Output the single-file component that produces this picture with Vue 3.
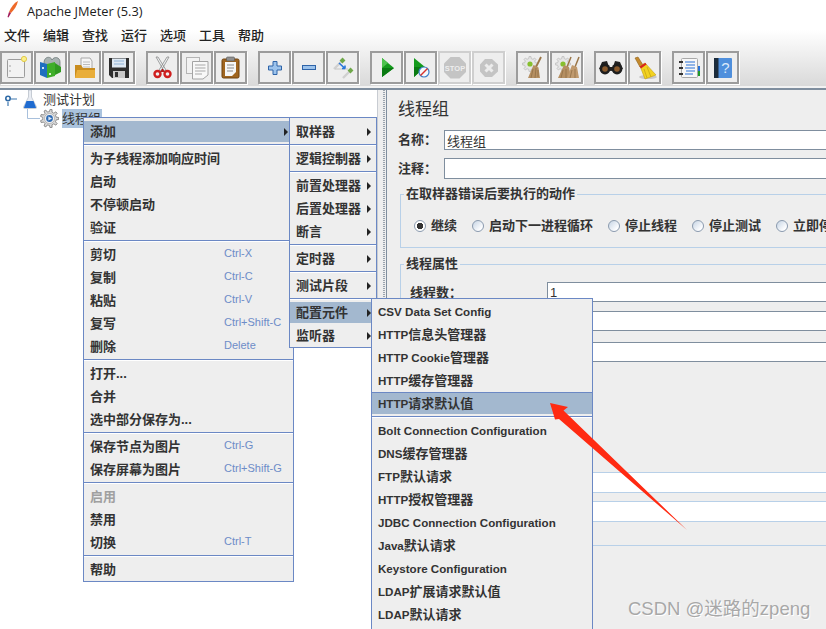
<template>
  <div class="jmeter">
    <div class="top">
      <div class="titlebar">
        <svg class="feather" width="14" height="18" viewBox="0 0 14 18">
          <path d="M12 0 C8 2 5 6 3 11 L5 12 C8 9 11 5 12 0 Z" fill="#ee6a2a" />
          <path d="M3 11 L1.5 16 L2.5 16.5 L5 12 Z" fill="#a01a5a" />
        </svg>
        <span>Apache JMeter (5.3)</span>
      </div>
      <div class="menubar">
        <span v-for="m in menuBar" :key="m">{{ m }}</span>
      </div>
      <div class="toolbar">
        <div class="tool-group">
          <button class="tool">
            <svg viewBox="0 0 29 29">
              <rect x="5.5" y="6.5" width="17" height="18" rx="1" fill="#f2f2f2" stroke="#9c9c9c" />
              <circle cx="8" cy="13" r=".8" fill="#999" /><circle cx="8" cy="18" r=".8" fill="#999" />
              <circle cx="22" cy="6" r="2.6" fill="#fbf08a" stroke="#e0c94a" />
            </svg>
          </button>
          <button class="tool">
            <svg viewBox="0 0 29 29">
              <path d="M8 10 C8 3 15 3 16 7 C18 3 24 4 24 9 L24 14 L8 14 Z" fill="#a8b2b2" stroke="#6f7a7a" stroke-width=".8" />
              <path d="M4 9 L11 11 L11 25 L4 22 Z" fill="#1f6fc0" />
              <path d="M11 11 L19 9 L19 23 L11 25 Z" fill="#3fae2a" />
              <path d="M19 10 L25 14 L25 19 L19 22 Z" fill="#2f9a20" />
              <rect x="6" y="14" width="2" height="2" fill="#cfe4f7" /><rect x="13" y="20" width="2" height="2" fill="#d8f0cc" />
            </svg>
          </button>
          <button class="tool">
            <svg viewBox="0 0 29 29">
              <path d="M11 5 L20 5 L22 8 L22 17 L11 17 Z" fill="#f5f5f5" stroke="#a8a8a8" />
              <path d="M13 9 H20 M13 11.5 H20 M13 14 H20" stroke="#bcbcbc" />
              <path d="M5 12 L11 12 L13 15 L25 15 L25 25 L5 25 Z" fill="#c98d1f" />
              <path d="M5 25 L7 17 L25 17 L25 25 Z" fill="#e9ae3a" />
            </svg>
          </button>
          <button class="tool">
            <svg viewBox="0 0 29 29">
              <path d="M5 5 H25 V25 H8 L5 22 Z" fill="#2e2e2e" />
              <rect x="8" y="5.5" width="14" height="9" fill="#dfe9f3" />
              <path d="M10 8 H20 M10 11 H20" stroke="#8fb2d6" />
              <rect x="9" y="18" width="12" height="7" fill="#c9c9c9" /><rect x="11" y="19" width="3" height="5" fill="#333" />
            </svg>
          </button>
        </div>
        <div class="tool-group">
          <button class="tool">
            <svg viewBox="0 0 29 29">
              <path d="M8 4 L10 4 L18 17 L16 18 Z M21 4 L19 4 L11 17 L13 18 Z" fill="#eceff0" stroke="#8c8c8c" stroke-width=".8" />
              <circle cx="9.5" cy="21" r="3" fill="none" stroke="#cf1f1f" stroke-width="2.4" />
              <circle cx="19.5" cy="21" r="3" fill="none" stroke="#cf1f1f" stroke-width="2.4" />
              <path d="M12 19 L17 19 L15 16 L14 16 Z" fill="#b41a1a" />
            </svg>
          </button>
          <button class="tool">
            <svg viewBox="0 0 29 29">
              <rect x="4.5" y="4.5" width="13" height="16" fill="#f2f2f2" stroke="#b4b4b4" />
              <path d="M10.5 8.5 H26 V22 L21 26 H10.5 Z" fill="#f8f8f8" stroke="#a4a4a4" />
              <path d="M13 12 H23.5 M13 15 H23.5 M13 18 H23.5 M13 21 H20" stroke="#a8a8a8" />
            </svg>
          </button>
          <button class="tool">
            <svg viewBox="0 0 29 29">
              <rect x="6" y="6" width="17" height="19" rx="1.5" fill="#a0651f" stroke="#6e4210" />
              <path d="M9 9 H20 V19 L16 23 H9 Z" fill="#f6f6f6" />
              <path d="M11 12 H18 M11 15 H18 M11 18 H17" stroke="#8c8c8c" />
              <rect x="10.5" y="4" width="8" height="4" rx="1" fill="#8f8f8f" stroke="#555" stroke-width=".6" />
            </svg>
          </button>
        </div>
        <div class="tool-group">
          <button class="tool">
            <svg viewBox="0 0 29 29">
              <path d="M13 8.5 H17 V13 H21.5 V17 H17 V21.5 H13 V17 H8.5 V13 H13 Z" fill="#9cc3ec" stroke="#2f64a8" />
            </svg>
          </button>
          <button class="tool">
            <svg viewBox="0 0 29 29">
              <rect x="8.5" y="12.5" width="13" height="4" fill="#9cc3ec" stroke="#2f64a8" />
            </svg>
          </button>
          <button class="tool">
            <svg viewBox="0 0 29 29">
              <path d="M6 16 L14 8" stroke="#d0d0d0" stroke-width="2.4" /><path d="M13 9 L16 6" stroke="#6fa84a" stroke-width="4" />
              <path d="M15 25 L22 18" stroke="#d0d0d0" stroke-width="2.4" /><path d="M21 19 L24 16" stroke="#6fa84a" stroke-width="4" />
              <path d="M7 16 L20 16 M11 10 L18 16" stroke="#c4c4c4" />
              <path d="M11 10 L17 15.5 M17 15.5 L17 12.5 M17 15.5 L14 15.5" stroke="#2a78dc" stroke-width="1.6" fill="none" />
            </svg>
          </button>
        </div>
        <div class="tool-group">
          <button class="tool">
            <svg viewBox="0 0 29 29">
              <path d="M10 5 L22 15 L10 24 Z" fill="#149a1c" />
              <path d="M10 15 L22 15 L10 24 Z" fill="#0a7a12" />
              <path d="M10 5 L10 15 L16 10 Z" fill="#4cc24c" />
            </svg>
          </button>
          <button class="tool">
            <svg viewBox="0 0 29 29">
              <path d="M8 5 L19 14 L8 24 Z" fill="#149a1c" />
              <path d="M8 14 L19 14 L8 24 Z" fill="#0a7a12" />
              <circle cx="18" cy="19" r="5" fill="#f4f8fc" stroke="#3f7fc8" stroke-width="1.2" />
              <path d="M14.5 22.5 L21.5 15.5" stroke="#d8322a" stroke-width="1.4" />
            </svg>
          </button>
          <button class="tool off">
            <svg viewBox="0 0 29 29">
              <path d="M10.5 4 H19.5 L26 10.5 V19 L19.5 25.5 H10.5 L4 19 V10.5 Z" fill="#c4c4c4" />
              <text x="15" y="17.5" text-anchor="middle" class="stop-text">STOP</text>
            </svg>
          </button>
          <button class="tool off">
            <svg viewBox="0 0 29 29">
              <path d="M11 6 H18 L24 11.5 V18.5 L18 24 H11 L6 18.5 V11.5 Z" fill="#c4c4c4" />
              <path d="M11.5 11.5 L18.5 18.5 M18.5 11.5 L11.5 18.5" stroke="#ececec" stroke-width="3" />
            </svg>
          </button>
        </div>
        <div class="tool-group">
          <button class="tool">
            <svg viewBox="0 0 29 29">
              <path :d="gearPath(12, 11, 7.5, 5.5, 8)" fill="#e6e6e6" stroke="#c4c4c4" />
              <circle cx="12" cy="11" r="2.6" fill="#86bf2e" />
              <path d="M23 4 L18 14" stroke="#9a7648" stroke-width="1.8" />
              <path d="M15.5 12 L20.5 14.5 L22 25 L10 25 Z" fill="#b58f62" />
              <path d="M15 16 L13 25 M18 15 L17 25 M20 17 L20 24" stroke="#8a6a42" stroke-width=".7" />
            </svg>
          </button>
          <button class="tool">
            <svg viewBox="0 0 29 29">
              <path :d="gearPath(11, 11, 7.5, 5.5, 8)" fill="#e6e6e6" stroke="#c4c4c4" />
              <circle cx="11" cy="11" r="2.6" fill="#86bf2e" />
              <path d="M19 4 L15 14 M27 4 L23 14" stroke="#9a7648" stroke-width="1.5" />
              <path d="M12 12 L17 14 L19 25 L6 25 Z" fill="#b58f62" />
              <path d="M20 12 L25 14 L27 25 L15 25 Z" fill="#c09a6e" />
              <path d="M11 17 L9 25 M14 16 L14 25 M20 17 L18 25 M23 16 L23 25" stroke="#8a6a42" stroke-width=".7" />
            </svg>
          </button>
        </div>
        <div class="tool-group">
          <button class="tool">
            <svg viewBox="0 0 29 29">
              <path d="M6 9 L11 8 L13 14 L17 14 L19 8 L24 9 L27 16 L15 18 L3 16 Z" fill="#222" />
              <circle cx="9" cy="16" r="5.4" fill="#1e1e1e" /><circle cx="21" cy="16" r="5.4" fill="#1e1e1e" />
              <circle cx="9" cy="16" r="2.8" fill="#8a5a2c" /><circle cx="21" cy="16" r="2.8" fill="#8a5a2c" />
            </svg>
          </button>
          <button class="tool">
            <svg viewBox="0 0 29 29">
              <ellipse cx="18" cy="24" rx="9" ry="2" fill="#c8c8c8" />
              <path d="M5 5 L8 4 L13 12 L10 14 Z" fill="#c48a2e" stroke="#8f621a" stroke-width=".6" />
              <path d="M10 13 L15 10 L26 22 L15 26 Z" fill="#f2d21f" stroke="#c2a012" stroke-width=".6" />
              <path d="M9.5 13.5 L15.5 9.8 L16.5 11.5 L11 15.5 Z" fill="#d8261f" />
              <path d="M14 16 L17 25 M17 14 L21 24" stroke="#c2a012" stroke-width=".7" />
            </svg>
          </button>
        </div>
        <div class="tool-group">
          <button class="tool">
            <svg viewBox="0 0 29 29">
              <rect x="7.5" y="5.5" width="16" height="19" rx="1" fill="#f7f7f7" stroke="#a8a8a8" />
              <path d="M5 9 H9 M5 15 H9 M5 21 H9" stroke="#333" stroke-width="2" />
              <path d="M11 9 H21 M12 12 H21 M11 15 H21 M12 18 H21 M11 21 H19" stroke="#2a72d8" stroke-width="1.1" />
              <rect x="24" y="13" width="2" height="5" fill="#2a72d8" /><rect x="24" y="18" width="2" height="5" fill="#1f9a2a" />
            </svg>
          </button>
          <button class="tool">
            <svg viewBox="0 0 29 29">
              <rect x="6" y="5" width="18" height="20" rx="1" fill="#4f8fdc" />
              <rect x="6" y="5" width="4.5" height="20" fill="#1c2c3c" />
              <text x="17.5" y="20" text-anchor="middle" class="help-text">?</text>
            </svg>
          </button>
        </div>
      </div>
    </div>

    <div class="workspace">
      <div class="tree">
        <div class="tree-row">
          <svg class="handle" width="19" height="19" viewBox="0 0 19 19">
            <path d="M4 12 V16 M7 9 H13" stroke="#3f78b0" stroke-width="1.2" />
            <circle cx="4" cy="8.5" r="2.2" fill="#fff" stroke="#2f6aa6" stroke-width="1.6" />
          </svg>
          <svg width="14" height="19" viewBox="0 0 14 19">
            <path d="M5.5 0 H8.5 V7 L13.5 17 Q14 18.5 12 18.5 H2 Q0 18.5 .5 17 L5.5 7 Z" fill="#e8ecf2" stroke="#a8b0bc" stroke-width=".6" />
            <path d="M3.5 11 H10.5 L13 17.5 Q13 18 12 18 H2 Q1 18 1 17.5 Z" fill="#1f6bd0" />
          </svg>
          <span class="tree-label">测试计划</span>
        </div>
        <div class="tree-row child">
          <svg width="13" height="19" viewBox="0 0 13 19">
            <path d="M.5 0 V9.5 H13" fill="none" stroke="#a8c0dc" />
          </svg>
          <svg width="19" height="19" viewBox="0 0 19 19">
            <path :d="gearPath(9.5, 9.5, 9.2, 6.8, 9)" fill="#d8d8d8" stroke="#777" stroke-width=".8" />
            <circle cx="9.5" cy="9.5" r="5" fill="#f4f4f4" stroke="#999" stroke-width=".6" />
            <circle cx="9.5" cy="9.5" r="3.4" fill="#2f6cb4" />
            <path d="M8.4 7.6 L12 9.5 L8.4 11.4 Z" fill="#dce8f6" />
          </svg>
          <span class="tree-label selected">线程组</span>
        </div>
      </div>
      <div class="gripper"></div>
      <div class="form">
        <div class="form-title">线程组</div>
        <div class="field name-field">
          <label>名称：</label>
          <input class="input" value="线程组" readonly />
        </div>
        <div class="field comment-field">
          <label>注释：</label>
          <input class="input tall" readonly />
        </div>
        <fieldset class="group action-group">
          <legend>在取样器错误后要执行的动作</legend>
          <div class="radios">
            <span v-for="(r, i) in radios" :key="r" class="radio-item">
              <i class="radio" :class="{ checked: i === 0 }"></i>{{ r }}
            </span>
          </div>
        </fieldset>
        <fieldset class="group thread-group">
          <legend>线程属性</legend>
          <div class="thread-count">
            <label>线程数：</label>
            <input class="input" value="1" readonly />
          </div>
          <div class="thread-inputs">
            <input class="input ramp" readonly />
            <input class="input loop" readonly />
            <input class="input soft first-soft" readonly />
            <input class="input soft second-soft" readonly />
          </div>
        </fieldset>
      </div>
    </div>

    <div class="menu main-menu">
      <template v-for="(item, i) in mainMenu" :key="i">
        <div v-if="item.sep" class="sep"></div>
        <div v-else class="item" :class="{ active: item.active, disabled: item.disabled }">
          <span class="item-label">{{ item.label }}</span>
          <span v-if="item.key" class="shortcut">{{ item.key }}</span>
          <i v-if="item.more" class="more"></i>
        </div>
      </template>
    </div>
    <div class="menu add-menu">
      <template v-for="(item, i) in addMenu" :key="i">
        <div v-if="item.sep" class="sep"></div>
        <div v-else class="item" :class="{ active: item.active }">
          <span class="item-label">{{ item.label }}</span>
          <i class="more"></i>
        </div>
      </template>
    </div>
    <div class="menu config-menu">
      <template v-for="(item, i) in configMenu" :key="i">
        <div v-if="item.sep" class="sep"></div>
        <div v-else class="item" :class="{ active: item.active }">
          <span class="item-label">
            <span v-for="(part, p) in splitLatin(item.label)" :key="p" :class="{ latin: part.latin }">{{ part.text }}</span>
          </span>
        </div>
      </template>
    </div>

    <svg class="callout" width="826" height="629" viewBox="0 0 826 629">
      <path d="M550 403 L568 407 L563.5 410.5 L687 530 L559 419 L555 419.5 Z" fill="#ff2a12" />
    </svg>
    <div class="watermark">CSDN @迷路的zpeng</div>
  </div>
</template>

<script setup>
const menuBar = ['文件', '编辑', '查找', '运行', '选项', '工具', '帮助']
const radios = ['继续', '启动下一进程循环', '停止线程', '停止测试', '立即停止测试']

const mainMenu = [
  { label: '添加', active: true, more: true },
  { sep: true },
  { label: '为子线程添加响应时间' },
  { label: '启动' },
  { label: '不停顿启动' },
  { label: '验证' },
  { sep: true },
  { label: '剪切', key: 'Ctrl-X' },
  { label: '复制', key: 'Ctrl-C' },
  { label: '粘贴', key: 'Ctrl-V' },
  { label: '复写', key: 'Ctrl+Shift-C' },
  { label: '删除', key: 'Delete' },
  { sep: true },
  { label: '打开...' },
  { label: '合并' },
  { label: '选中部分保存为...' },
  { sep: true },
  { label: '保存节点为图片', key: 'Ctrl-G' },
  { label: '保存屏幕为图片', key: 'Ctrl+Shift-G' },
  { sep: true },
  { label: '启用', disabled: true },
  { label: '禁用' },
  { label: '切换', key: 'Ctrl-T' },
  { sep: true },
  { label: '帮助' }
]

const addMenu = [
  { label: '取样器' },
  { sep: true },
  { label: '逻辑控制器' },
  { sep: true },
  { label: '前置处理器' },
  { label: '后置处理器' },
  { label: '断言' },
  { sep: true },
  { label: '定时器' },
  { sep: true },
  { label: '测试片段' },
  { sep: true },
  { label: '配置元件', active: true },
  { label: '监听器' }
]

const configMenu = [
  { label: 'CSV Data Set Config' },
  { label: 'HTTP信息头管理器' },
  { label: 'HTTP Cookie管理器' },
  { label: 'HTTP缓存管理器' },
  { label: 'HTTP请求默认值', active: true },
  { sep: true },
  { label: 'Bolt Connection Configuration' },
  { label: 'DNS缓存管理器' },
  { label: 'FTP默认请求' },
  { label: 'HTTP授权管理器' },
  { label: 'JDBC Connection Configuration' },
  { label: 'Java默认请求' },
  { label: 'Keystore Configuration' },
  { label: 'LDAP扩展请求默认值' },
  { label: 'LDAP默认请求' }
]

// latin runs are set smaller than the CJK ones in this menu
function splitLatin(label) {
  return label
    .split(/([\x20-\x7e]+)/)
    .filter(Boolean)
    .map((text) => ({ text, latin: /^[\x20-\x7e]/.test(text) }))
}

// teeth of a gear as a closed polygon
function gearPath(cx, cy, outer, inner, teeth) {
  const pts = []
  const step = (Math.PI * 2) / teeth
  for (let i = 0; i < teeth; i++) {
    const a = i * step
    const corners = [
      [inner, a - step * 0.5],
      [inner, a - step * 0.28],
      [outer, a - step * 0.16],
      [outer, a + step * 0.16],
      [inner, a + step * 0.28]
    ]
    for (const [r, t] of corners) {
      pts.push((cx + r * Math.cos(t)).toFixed(2) + ' ' + (cy + r * Math.sin(t)).toFixed(2))
    }
  }
  return 'M' + pts.join(' L') + ' Z'
}
</script>

<style>
html,
body {
  margin: 0;
  background: #fff;
}
</style>

<style scoped>
.jmeter {
  position: relative;
  width: 826px;
  height: 629px;
  overflow: hidden;
  background: #eee;
  color: #333;
  font-family: "Liberation Sans", "Noto Sans CJK SC", sans-serif;
  font-size: 13px;
}

.top {
  height: 88px;
  box-sizing: border-box;
  background: linear-gradient(#fff 0, #fff 30px, #d9d9d9 86px, #f2f2f2 86px);
}

.titlebar {
  display: flex;
  align-items: center;
  height: 21px;
  padding-left: 6px;
  font-family: "Open Sans", "Noto Sans", sans-serif;
  font-size: 12.8px;
  color: #1c1c1c;
}

.feather {
  margin-right: 7px;
  margin-top: -2px;
}

.menubar {
  display: flex;
  gap: 13px;
  height: 20px;
  margin-top: 5px;
  padding-left: 4px;
  line-height: 20px;
  font-weight: 500;
  color: #222;
}

.toolbar {
  display: flex;
  gap: 11px;
  margin-top: 5px;
}

.tool-group {
  display: flex;
  gap: 1px;
}

.tool {
  width: 33px;
  height: 33px;
  padding: 0;
  box-sizing: border-box;
  background: #eee;
  border: 2px solid #9c9c9c;
  box-shadow: 1px 1px 0 #fff;
}

.tool.off {
  border-color: #cfcfcf;
}

.tool svg {
  display: block;
  width: 29px;
  height: 29px;
}

.stop-text {
  font-size: 7.5px;
  font-weight: bold;
  fill: #eee;
}

.help-text {
  font-size: 15px;
  fill: #dbe9fa;
}

.workspace {
  display: flex;
  height: 541px;
  border-top: 2px solid #7f8e9e;
  box-sizing: border-box;
}

.tree {
  width: 377px;
  flex-shrink: 0;
  background: #fff;
}

.tree-row {
  display: flex;
  align-items: center;
  height: 19px;
  padding-left: 4px;
}

.tree-row.child {
  padding-left: 27px;
}

.tree-label {
  margin-left: 6px;
  line-height: 19px;
  color: #333;
}

.tree-label.selected {
  width: 40px;
  margin-left: 3px;
  background: #aac3de;
}

.gripper {
  width: 10px;
  flex-shrink: 0;
  box-sizing: border-box;
  border-left: 1px solid #c8ccd2;
  border-right: 1px solid #7f8e9e;
  background: repeating-linear-gradient(#9aa3ad 0 1px, transparent 1px 2px) no-repeat 5px 0 / 2px 100%;
  background-color: #eee;
}

.form {
  flex: 1;
  min-width: 0;
  padding: 10px 0 0 11px;
  overflow: hidden;
}

.form-title {
  font-size: 17px;
  line-height: 20px;
}

.field {
  display: flex;
}

.field label {
  width: 46px;
  flex-shrink: 0;
  font-weight: bold;
  line-height: 20px;
}

.name-field {
  margin-top: 10px;
}

.comment-field {
  margin-top: 8px;
}

.comment-field label {
  line-height: 21px;
}

.input {
  display: block;
  width: 460px;
  height: 20px;
  flex-shrink: 0;
  margin: 0;
  padding: 0 2px;
  box-sizing: border-box;
  background: #fff;
  border: 1px solid #7f8e9e;
  border-radius: 0;
  outline: none;
  color: #333;
  font: 13px "Liberation Sans", "Noto Sans CJK SC", sans-serif;
}

.input.tall {
  height: 21px;
}

.group {
  box-sizing: border-box;
  width: 500px;
  min-width: 0;
  margin: 0 0 0 2px;
  padding: 0 0 0 13px;
  border: 1px solid #b8d0e8;
}

.group legend {
  margin-left: -10px;
  padding: 0 2px;
  font-weight: bold;
  line-height: 16px;
}

.action-group {
  margin-top: 7px;
  padding-bottom: 13px;
}

.radios {
  display: flex;
  gap: 15px;
  height: 16px;
  margin-top: 16px;
  font-weight: bold;
  line-height: 16px;
  white-space: nowrap;
}

.radio-item {
  display: flex;
  align-items: center;
}

.radio {
  width: 12px;
  height: 12px;
  margin-right: 5px;
  box-sizing: border-box;
  border: 1px solid #8a9aae;
  border-radius: 50%;
  background: linear-gradient(135deg, #c6d4e4, #fbfcfe 75%);
}

.radio.checked {
  background: radial-gradient(circle, #333 0 3px, #fff 3.5px);
}

.thread-group {
  margin-top: 8px;
  height: 290px;
}

.thread-count {
  display: flex;
  height: 20px;
  margin-top: 10px;
}

.thread-count label {
  width: 137px;
  flex-shrink: 0;
  margin-left: -4px;
  font-weight: bold;
  line-height: 22px;
}

.thread-inputs {
  margin-left: 133px;
}

.ramp {
  margin-top: 9px;
}

.loop {
  margin-top: 11px;
}

.input.soft {
  height: 21px;
  border-color: #b8d0e8;
}

.first-soft {
  margin-top: 110px;
}

.second-soft {
  margin-top: 8px;
}

.menu {
  position: absolute;
  box-sizing: border-box;
  background: #eee;
  border: 1px solid #6b88c4;
  font-weight: bold;
  white-space: nowrap;
}

.main-menu {
  left: 83px;
  top: 117px;
  width: 211px;
  padding-top: 2px;
}

.add-menu {
  left: 289px;
  top: 117px;
  width: 88px;
  padding-top: 2px;
}

.config-menu {
  left: 371px;
  top: 298px;
  width: 222px;
  height: 340px;
  padding-top: 1px;
}

.item {
  display: flex;
  align-items: center;
  height: 23px;
  padding-left: 6px;
  color: #333;
}

.item.active {
  background: #a3b8cf;
  background-clip: content-box;
  padding-top: 1px;
  padding-bottom: 1px;
  height: 21px;
  padding-left: 0;
}

.config-menu .item.active {
  padding-top: 0;
  border-top: 1px solid #6b88c4;
}

.item.active .item-label {
  padding-left: 6px;
}

.item.disabled {
  color: #a0a0a0;
}

.item-label {
  flex: 1;
  line-height: 21px;
}

.latin {
  font-size: 11.6px;
}

.shortcut {
  width: 69px;
  flex-shrink: 0;
  margin-bottom: 3px;
  color: #6d8cc8;
  font-size: 11px;
  font-weight: normal;
}

.more {
  width: 0;
  height: 0;
  margin-right: 5px;
  border-left: 4px solid #222;
  border-top: 4px solid transparent;
  border-bottom: 4px solid transparent;
}

.sep {
  height: 4px;
  box-sizing: border-box;
  padding-top: 1px;
}

.sep::before {
  content: "";
  display: block;
  height: 1px;
  background: #6b88c4;
  box-shadow: 0 1px 0 #fff;
}

.callout {
  position: absolute;
  left: 0;
  top: 0;
  pointer-events: none;
}

.watermark {
  position: absolute;
  left: 628px;
  top: 598px;
  color: #a8a8a8;
  font-size: 18.5px;
  line-height: 22px;
  text-shadow: 1px 1px 0 #fff;
  white-space: nowrap;
}
</style>
